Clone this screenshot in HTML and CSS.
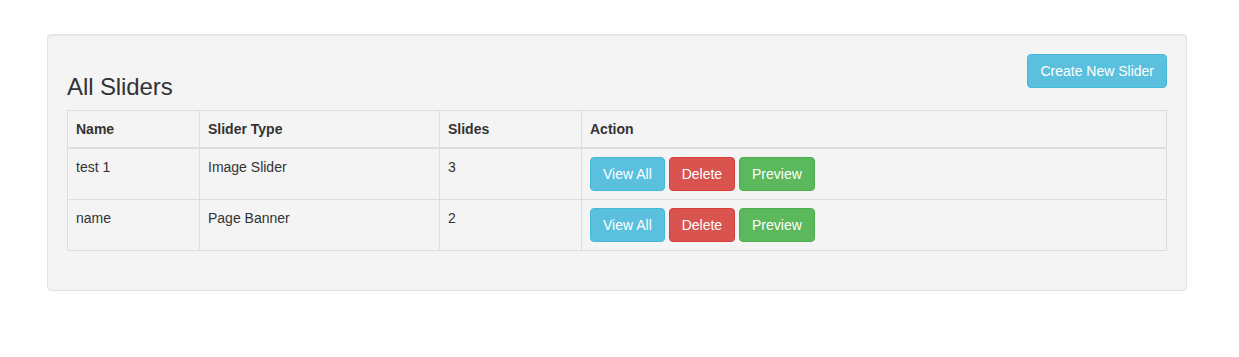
FILE: index.html
```html
<!DOCTYPE html>
<html lang="en">
<head>
    <meta charset="UTF-8">
    <title>All Sliders</title>
    <link rel="stylesheet" href="styles.css">
</head>
<body>
    <div class="container">
        <div class="well">
            <a class="btn btn-info pull-right" href="#">Create New Slider</a>
            <h3>All Sliders</h3>
            <table class="table">
                <thead>
                    <tr>
                        <th class="col-name">Name</th>
                        <th class="col-type">Slider Type</th>
                        <th class="col-slides">Slides</th>
                        <th>Action</th>
                    </tr>
                </thead>
                <tbody>
                    <tr>
                        <td>test 1</td>
                        <td>Image Slider</td>
                        <td>3</td>
                        <td>
                            <a class="btn btn-info" href="#">View All</a>
                            <a class="btn btn-danger" href="#">Delete</a>
                            <a class="btn btn-success" href="#">Preview</a>
                        </td>
                    </tr>
                    <tr>
                        <td>name</td>
                        <td>Page Banner</td>
                        <td>2</td>
                        <td>
                            <a class="btn btn-info" href="#">View All</a>
                            <a class="btn btn-danger" href="#">Delete</a>
                            <a class="btn btn-success" href="#">Preview</a>
                        </td>
                    </tr>
                </tbody>
            </table>
        </div>
    </div>
</body>
</html>
```

FILE: styles.css
```css
body {
    margin: 0;
    font-family: "Liberation Sans", Arial, sans-serif;
    font-size: 14px;
    line-height: 20px;
    color: #333;
    background-color: #fff;
}
.container {
    width: 1140px;
    margin-left: 47px;
    padding-top: 34px;
}
.well {
    background-color: #f4f4f4;
    border: 1px solid #e3e3e3;
    border-radius: 4px;
    box-shadow: inset 0 1px 1px rgba(0, 0, 0, 0.05);
    padding: 19px;
    min-height: 20px;
}
.well::after {
    content: "";
    display: table;
    clear: both;
}
.pull-right {
    float: right;
}
h3 {
    font-size: 24px;
    font-weight: 500;
    line-height: 1.1;
    margin: 20px 0 10px;
    letter-spacing: -0.1px;
}
.btn {
    display: inline-block;
    padding: 6px 12px;
    font-size: 14px;
    line-height: 20px;
    border: 1px solid transparent;
    border-radius: 4px;
    color: #fff;
    text-decoration: none;
    vertical-align: middle;
    cursor: pointer;
}
.btn-info {
    background-color: #5bc0de;
    border-color: #46b8da;
}
.btn-danger {
    background-color: #d9534f;
    border-color: #d43f3a;
}
.btn-success {
    background-color: #5cb85c;
    border-color: #4cae4c;
}
.table {
    width: 100%;
    border-collapse: collapse;
    table-layout: fixed;
    margin-bottom: 20px;
    border: 1px solid #ddd;
}
.table th, .table td {
    box-sizing: border-box;
    padding: 8px;
    text-align: left;
    vertical-align: top;
    border: 1px solid #ddd;
    line-height: 20px;
}
.table thead th {
    vertical-align: bottom;
    border-bottom-width: 2px;
    font-weight: bold;
}
.col-name {
    width: 132px;
}
.col-type {
    width: 240px;
}
.col-slides {
    width: 142px;
}
```
